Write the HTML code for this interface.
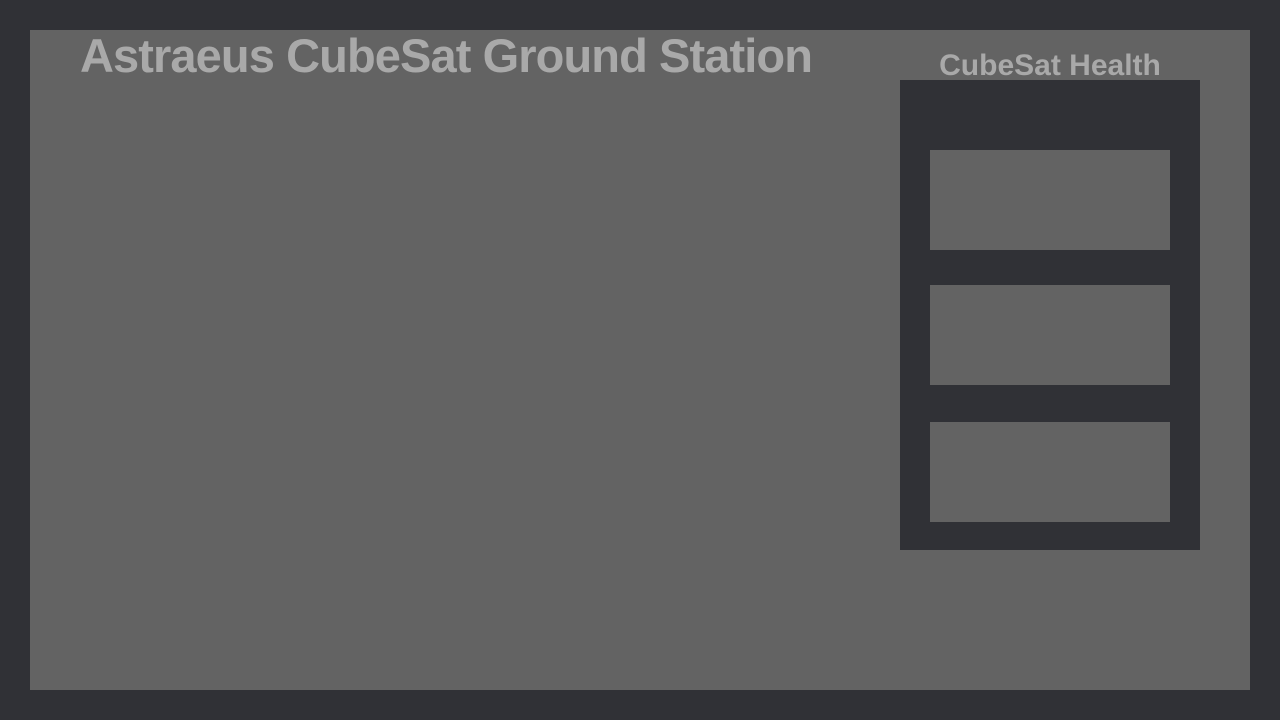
<!DOCTYPE html>
<html><head><style>
body{margin:0;width:1280px;height:720px;background:#303136;position:relative;overflow:hidden;font-family:"Liberation Sans",sans-serif}
.main{position:absolute;left:30px;top:30px;width:1220px;height:660px;background:#636363}
.title{position:absolute;left:80px;top:28px;font-size:47px;font-weight:bold;color:#a9a9a9;white-space:nowrap;letter-spacing:-0.9px}
.h2{position:absolute;left:900px;width:300px;top:49px;text-align:center;font-size:30px;font-weight:bold;color:#a9a9a9;letter-spacing:0}
.panel{position:absolute;left:900px;top:80px;width:300px;height:470px;background:#303136}
.box{position:absolute;left:930px;width:240px;height:100px;background:#636363}
</style></head><body>
<div class="main"></div>
<div class="title">Astraeus CubeSat Ground Station</div>
<div class="panel"></div>
<div class="h2">CubeSat Health</div>
<div class="box" style="top:150px"></div>
<div class="box" style="top:285px"></div>
<div class="box" style="top:422px"></div>
</body></html>
